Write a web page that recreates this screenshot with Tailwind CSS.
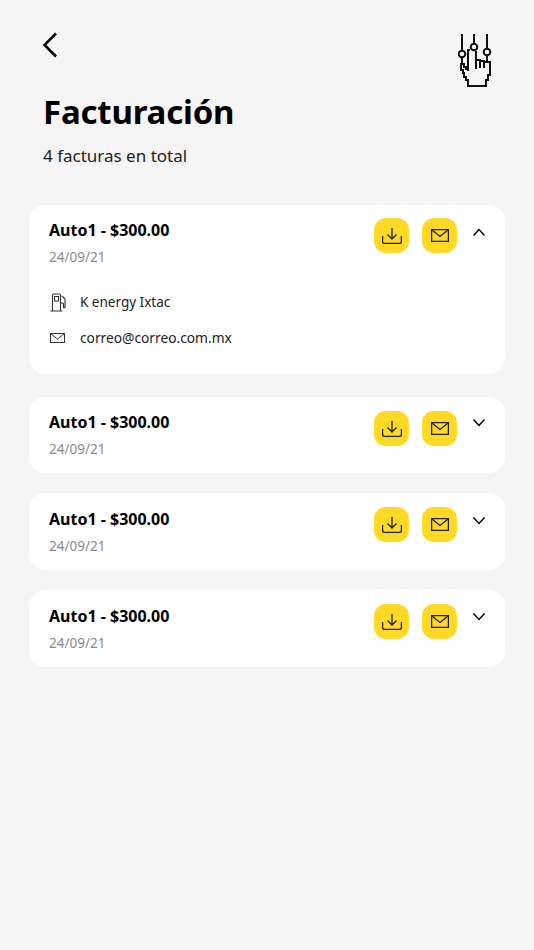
<!DOCTYPE html>
<html lang="es">
<head>
    <meta charset="UTF-8">
    <title>Facturación</title>
    <script src="https://cdn.jsdelivr.net/npm/@tailwindcss/browser@4"></script>
</head>
<body class="bg-[#f5f5f5] font-['Noto_Sans',sans-serif] text-black">
<div class="w-[534px] h-[950px] overflow-hidden">
    <!-- Header -->
    <div class="flex justify-between items-start pl-[42px] pr-[40px] pt-[32px] h-[91px]">
        <svg width="15" height="26" viewBox="0 0 15 26" fill="none" stroke="#000" stroke-width="2.6"><path d="M14 1.500 L2.500 13 L14 24.500"/></svg>
        <svg class="mt-[1px]" width="36" height="56" viewBox="0 0 36 56" fill="none" stroke="#111" stroke-width="2">
            <path d="M4 1V18M16 1V11M29 1V16M4 25V31M29 22V29"/>
            <circle cx="4" cy="21" r="3.300"/><circle cx="16" cy="14" r="3.300"/><circle cx="29" cy="19" r="3.300"/>
            <path d="M10 38V17H12M18 18V36M18 27H22V35M22 28H26V35M26 29H32V42H30V47H28V53H10V47H8V44H6V40H5V37H3V31H6V34H8V36H10"/>
        </svg>
    </div>

    <div class="pl-[43px]">
        <h1 class="text-[33px] leading-[42px] font-bold tracking-[-0.2px]">Facturación</h1>
        <p class="mt-[11px] text-[17px] leading-[24px] text-[#222]">4 facturas en total</p>
    </div>

    <!-- Invoices -->
    <div class="mx-[29px] mt-[37px] flex flex-col">
        <div class="bg-white rounded-[16px] w-[476px] h-[169px] pl-[20px] pr-[20px] pt-[13px]">
            <div class="flex justify-between">
                <div>
                    <div class="text-[16px] leading-[24px] font-bold">Auto1 - $300.00</div>
                    <div class="mt-[5px] text-[13.5px] leading-[20px] text-[#8a8a8a]">24/09/21</div>
                </div>
                <div class="flex items-start">
                    <button class="w-[35px] h-[35px] rounded-[12px] bg-[#ffd926] flex items-center justify-center">
                        <svg width="20" height="16" viewBox="0 0 20 16" fill="none" stroke="#222" stroke-width="1.300"><path d="M10 0V11M5.500 6.500L10 11l4.500-4.500M.6 8v5.500c0 1 .8 1.900 1.900 1.900h15c1.100 0 1.900-.9 1.900-1.900V8"/></svg>
                    </button>
                    <button class="ml-[13px] w-[35px] h-[35px] rounded-[12px] bg-[#ffd926] flex items-center justify-center">
                        <svg width="18" height="13" viewBox="0 0 18 13" fill="none" stroke="#222" stroke-width="1.300"><rect x="0.600" y="0.600" width="16.800" height="11.800"/><path d="M1 1l8 6.500L17 1"/></svg>
                    </button>
                    <svg class="ml-[16px] mt-[10px]" width="12" height="8" viewBox="0 0 12 8" fill="none" stroke="#000" stroke-width="1.500"><path d="M.5 7.500L6 1.500l5.500 6"/></svg>
                </div>
            </div>
            <div class="mt-[25px] flex items-center text-[13.5px] leading-[20px] text-[#222]">
                <svg class="ml-[1px] w-[16px]" width="16" height="19" viewBox="0 0 16 19" fill="none" stroke="#333" stroke-width="1.100"><path d="M2.500 17.500V2c0-.6.4-1 1-1h6c.6 0 1 .4 1 1v15.500M.5 18h12M4.500 3.500h4V8h-4zM10.500 10h2c.5 0 1 .4 1 1v3c0 1 1.500 1 1.500 0V6l-3-3"/></svg>
                <span class="ml-[14px]">K energy Ixtac</span>
            </div>
            <div class="mt-[16px] flex items-center text-[13.75px] leading-[20px] text-[#222]">
                <svg class="ml-[1px] w-[15px]" width="15" height="10" viewBox="0 0 15 10" fill="none" stroke="#333" stroke-width="1"><rect x="0.500" y="0.500" width="14" height="9"/><path d="M1 1l6.500 5L14 1"/></svg>
                <span class="ml-[15px]">correo@correo.com.mx</span>
            </div>
        </div>

        <div class="mt-[23px] bg-white rounded-[16px] w-[476px] h-[76px] pl-[20px] pr-[20px] pt-[14px] flex justify-between">
            <div class="-mt-[1px]">
                <div class="text-[16px] leading-[24px] font-bold">Auto1 - $300.00</div>
                <div class="mt-[5px] text-[13.5px] leading-[20px] text-[#8a8a8a]">24/09/21</div>
            </div>
            <div class="flex items-start">
                <button class="w-[35px] h-[35px] rounded-[12px] bg-[#ffd926] flex items-center justify-center">
                    <svg width="20" height="16" viewBox="0 0 20 16" fill="none" stroke="#222" stroke-width="1.300"><path d="M10 0V11M5.500 6.500L10 11l4.500-4.500M.6 8v5.500c0 1 .8 1.900 1.900 1.900h15c1.100 0 1.900-.9 1.900-1.900V8"/></svg>
                </button>
                <button class="ml-[13px] w-[35px] h-[35px] rounded-[12px] bg-[#ffd926] flex items-center justify-center">
                    <svg width="18" height="13" viewBox="0 0 18 13" fill="none" stroke="#222" stroke-width="1.300"><rect x="0.600" y="0.600" width="16.800" height="11.800"/><path d="M1 1l8 6.500L17 1"/></svg>
                </button>
                <svg class="ml-[16px] mt-[8px]" width="12" height="8" viewBox="0 0 12 8" fill="none" stroke="#000" stroke-width="1.500"><path d="M.5.5l5.500 6 5.500-6"/></svg>
            </div>
        </div>

        <div class="mt-[20px] bg-white rounded-[16px] w-[476px] h-[77px] pl-[20px] pr-[20px] pt-[14px] flex justify-between">
            <div>
                <div class="text-[16px] leading-[24px] font-bold">Auto1 - $300.00</div>
                <div class="mt-[5px] text-[13.5px] leading-[20px] text-[#8a8a8a]">24/09/21</div>
            </div>
            <div class="flex items-start">
                <button class="w-[35px] h-[35px] rounded-[12px] bg-[#ffd926] flex items-center justify-center">
                    <svg width="20" height="16" viewBox="0 0 20 16" fill="none" stroke="#222" stroke-width="1.300"><path d="M10 0V11M5.500 6.500L10 11l4.500-4.500M.6 8v5.500c0 1 .8 1.900 1.900 1.900h15c1.100 0 1.900-.9 1.900-1.900V8"/></svg>
                </button>
                <button class="ml-[13px] w-[35px] h-[35px] rounded-[12px] bg-[#ffd926] flex items-center justify-center">
                    <svg width="18" height="13" viewBox="0 0 18 13" fill="none" stroke="#222" stroke-width="1.300"><rect x="0.600" y="0.600" width="16.800" height="11.800"/><path d="M1 1l8 6.500L17 1"/></svg>
                </button>
                <svg class="ml-[16px] mt-[10px]" width="12" height="8" viewBox="0 0 12 8" fill="none" stroke="#000" stroke-width="1.500"><path d="M.5.5l5.500 6 5.500-6"/></svg>
            </div>
        </div>

        <div class="mt-[20px] bg-white rounded-[16px] w-[476px] h-[77px] pl-[20px] pr-[20px] pt-[14px] flex justify-between">
            <div>
                <div class="text-[16px] leading-[24px] font-bold">Auto1 - $300.00</div>
                <div class="mt-[5px] text-[13.5px] leading-[20px] text-[#8a8a8a]">24/09/21</div>
            </div>
            <div class="flex items-start">
                <button class="w-[35px] h-[35px] rounded-[12px] bg-[#ffd926] flex items-center justify-center">
                    <svg width="20" height="16" viewBox="0 0 20 16" fill="none" stroke="#222" stroke-width="1.300"><path d="M10 0V11M5.500 6.500L10 11l4.500-4.500M.6 8v5.500c0 1 .8 1.900 1.900 1.900h15c1.100 0 1.900-.9 1.900-1.900V8"/></svg>
                </button>
                <button class="ml-[13px] w-[35px] h-[35px] rounded-[12px] bg-[#ffd926] flex items-center justify-center">
                    <svg width="18" height="13" viewBox="0 0 18 13" fill="none" stroke="#222" stroke-width="1.300"><rect x="0.600" y="0.600" width="16.800" height="11.800"/><path d="M1 1l8 6.500L17 1"/></svg>
                </button>
                <svg class="ml-[16px] mt-[9px]" width="12" height="8" viewBox="0 0 12 8" fill="none" stroke="#000" stroke-width="1.500"><path d="M.5.5l5.500 6 5.500-6"/></svg>
            </div>
        </div>
    </div>
</div>
</body>
</html>
